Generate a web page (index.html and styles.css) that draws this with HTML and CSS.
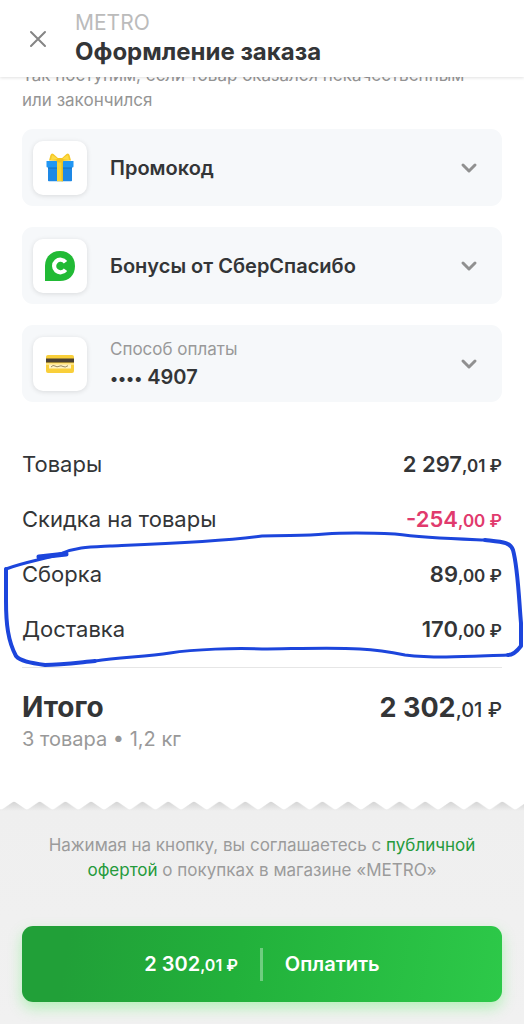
FILE: index.html
```html
<!DOCTYPE html>
<html lang="ru">
<head>
<meta charset="utf-8">
<meta name="viewport" content="width=device-width, initial-scale=1">
<title>Оформление заказа</title>
<link rel="stylesheet" href="styles.css">
</head>
<body>
<header class="header">
  <button class="close" type="button" aria-label="Закрыть">
    <svg width="20" height="20" viewBox="0 0 20 20"><path d="M3 3 17 17M17 3 3 17"/></svg>
  </button>
  <div>
    <p class="store">METRO</p>
    <h1 class="title">Оформление заказа</h1>
  </div>
</header>
<main class="content">
  <p class="note">Так поступим, если товар оказался некачественным или закончился</p>
  <div class="options">
    <button class="option" type="button">
      <span class="tile">
        <svg width="30" height="32" viewBox="0 0 30 32">
          <path fill="#1e88e5" d="M3 14h24v14.5q0 .8-.8.8H3.800q-.8 0-.8-.8z"/>
          <path fill="#2196f3" d="M1.500 9h27v5.500q0 1-1 1h-25q-1 0-1-1z"/>
          <path fill="#1976c8" d="M3 15.500h24v1.200H3z"/>
          <path fill="#fbd535" d="M12 9h6v20.300h-6z"/>
          <path fill="#e8bd24" d="M16.500 9H18v20.300h-1.500z"/>
          <path fill="#f5c827" d="M15 9 4 8.500 5.500 3Q6.500.5 8.500 2L14 7h2l5.500-5q2-1.500 3 1L26 8.500z"/>
          <path fill="#fddb45" d="M7 3.200Q8 3 13 7l-7 1zM23 3.200q-1-.2-6 3.800l7 1z"/>
          <rect fill="#f3c321" x="11.500" y="6" width="7" height="4.500" rx="2"/>
        </svg>
      </span>
      <span class="option-text"><b class="option-title">Промокод</b></span>
      <svg class="chevron" width="18" height="12" viewBox="0 0 18 12"><path d="M3 3l6 6 6-6"/></svg>
    </button>
    <button class="option" type="button">
      <span class="tile">
        <svg width="30" height="32" viewBox="0 0 30 32">
          <path fill="#21ba35" d="M0 31V16C0 7 6 1 15 1s15 6 15 15-6 15-15 15z"/>
          <path fill="none" stroke="#fff" stroke-width="4.200" d="M20.500 12.300A6.300 6.300 0 1 0 20.500 19.700"/>
        </svg>
      </span>
      <span class="option-text"><b class="option-title">Бонусы от СберСпасибо</b></span>
      <svg class="chevron" width="18" height="12" viewBox="0 0 18 12"><path d="M3 3l6 6 6-6"/></svg>
    </button>
    <button class="option" type="button">
      <span class="tile">
        <svg width="30" height="20" viewBox="0 0 30 20">
          <rect fill="#f9cf3a" x="1" y="1" width="28" height="18" rx="2"/>
          <path fill="#ffe27a" d="M1 9h28v2H1z"/>
          <path fill="#4a4033" d="M1 4.500h28v4H1z"/>
          <path fill="#fff3c4" d="M4 10.500h22v4H4z"/>
          <path fill="none" stroke="#8b7d55" stroke-width=".9" d="M6 13q2-2.500 4-1t4 .3 4 .2 5-.8"/>
        </svg>
      </span>
      <span class="option-text"><span class="option-label">Способ оплаты</span><b class="option-title"><span class="dots">••••</span> 4907</b></span>
      <svg class="chevron" width="18" height="12" viewBox="0 0 18 12"><path d="M3 3l6 6 6-6"/></svg>
    </button>
  </div>
  <dl class="costs">
    <div class="row"><dt>Товары</dt><dd class="price">2 297<small>,01 ₽</small></dd></div>
    <div class="row"><dt>Скидка на товары</dt><dd class="price discount">-254<small>,00 ₽</small></dd></div>
  </dl>
  <div class="circled">
    <dl class="costs-fees">
      <div class="row"><dt>Сборка</dt><dd class="price">89<small>,00 ₽</small></dd></div>
      <div class="row"><dt>Доставка</dt><dd class="price">170<small>,00 ₽</small></dd></div>
    </dl>
    <svg class="marker" viewBox="0 525 524 145" preserveAspectRatio="none" aria-hidden="true">
      <path d="M6 568C25 561 45 558 60 553C76 546 90 546 110 545C160 543 220 541 262 535C290 534 306 535 325 533C350 531 375 532 395 533C425 537 460 538 485 539"/>
      <path class="marker-thick" d="M485 539C503 541 510 541 513 549C518 567 519 600 521 622L521 645C518 649 514 654 508 654"/>
      <path d="M508 654C475 655 440 658 405 654C390 651 378 649 360 648C330 646 290 648 262 648C235 647 195 648 170 652C145 656 120 656 95 660"/>
      <path class="marker-thick" d="M95 660C75 662 60 664 45 664C30 662 20 660 16 655C8 640 6 623 6 600L6 568"/>
      <path class="marker-blot" d="M39 556 66 553"/>
    </svg>
  </div>
  <section class="total">
    <div class="total-row"><h2>Итого</h2><strong class="total-price">2 302<small>,01 ₽</small></strong></div>
    <p class="summary">3 товара • 1,2 кг</p>
  </section>
</main>
<footer class="footer">
  <svg class="zigzag" aria-hidden="true">
    <defs>
      <linearGradient id="shade" x1="0" y1="0" x2="0" y2="1"><stop offset="0" stop-color="#d4d4d4"/><stop offset="1" stop-color="#efefef"/></linearGradient>
      <pattern id="teeth" x="1.200" width="25.700" height="10" patternUnits="userSpaceOnUse">
        <path fill="url(#shade)" d="M0 8.500Q1.500 8 3 7L11 1.500Q12.850 0 14.700 1.500L22.700 7Q24.200 8 25.700 8.500V10H0z"/>
      </pattern>
    </defs>
    <rect width="100%" height="10" fill="url(#teeth)"/>
  </svg>
  <div class="footer-body">
    <p class="terms">Нажимая на кнопку, вы соглашаетесь с <a href="#offer">публичной офертой</a> о покупках в магазине «METRO»</p>
    <button class="pay" type="button"><span class="pay-price">2 302<small>,01 ₽</small></span><span class="pay-label">Оплатить</span></button>
  </div>
</footer>
</body>
</html>
```
FILE: styles.css
```css
* { box-sizing: border-box; }
body {
  margin: 0;
  min-height: 100vh;
  display: flex;
  flex-direction: column;
  background: #fff;
  color: #333537;
  font-family: Inter, "Noto Sans", sans-serif;
}
p, h1, h2, dl, dd { margin: 0; }
button { border: 0; padding: 0; font: inherit; color: inherit; cursor: pointer; }
.header {
  position: sticky;
  top: 0;
  z-index: 2;
  display: flex;
  align-items: center;
  gap: 27px;
  padding: 10px 28px 9px;
  background: #fff;
  box-shadow: 0 1px 3px rgba(0, 0, 0, .12);
}
.close { display: flex; background: none; }
.close svg { fill: none; stroke: #858585; stroke-width: 2; stroke-linecap: round; }
.store { color: #bbb; font-size: 21px; line-height: 26px; }
.title { font-size: 24px; line-height: 32px; font-weight: 700; }
.content { padding: 0 22px 47px; }
.note { margin-top: -14px; padding-right: 20px; color: #959595; font-size: 17px; line-height: 25px; }
.options { display: grid; gap: 21px; margin-top: 16px; }
.option {
  display: flex;
  align-items: center;
  width: 100%;
  min-height: 77px;
  padding: 10px 24px 10px 11px;
  border-radius: 11px;
  background: #f6f8fa;
  text-align: left;
}
.tile {
  display: flex;
  align-items: center;
  justify-content: center;
  width: 54px;
  height: 54px;
  border-radius: 10px;
  background: #fff;
  box-shadow: 0 1px 5px rgba(0, 0, 0, .12);
}
.option-text { flex: 1; padding-left: 23px; }
.option-label { display: block; color: #999; font-size: 17px; line-height: 28px; }
.option-title { display: block; font-size: 20px; line-height: 28px; font-weight: 600; }
.dots { font-size: 16px; }
.chevron { fill: none; stroke: #909090; stroke-width: 3; stroke-linecap: round; stroke-linejoin: round; }
.costs { margin-top: 34px; }
.row { display: flex; justify-content: space-between; align-items: center; height: 55px; font-size: 22px; }
.price { font-weight: 600; }
.price small { font-size: 17px; }
.discount { color: #e13a6d; }
.circled { position: relative; }
.marker { position: absolute; top: -20px; left: -22px; width: calc(100% + 44px); height: 145px; fill: none; stroke: #1c45dc; stroke-width: 3; stroke-linejoin: round; stroke-linecap: round; pointer-events: none; }
.marker-thick { stroke-width: 4; }
.marker-blot { stroke-width: 5; }
.total { margin-top: 11px; padding-top: 22px; border-top: 1px solid #e6e6e6; }
.total-row { display: flex; justify-content: space-between; align-items: center; height: 34px; }
.total h2 { font-size: 28px; font-weight: 700; }
.total-price { font-size: 27px; font-weight: 700; }
.total-price small { font-size: 20px; font-weight: 500; }
.summary { color: #999; font-size: 20px; line-height: 30px; }
.footer { flex: 1; display: flex; flex-direction: column; }
.zigzag { display: block; width: 100%; height: 10px; }
.footer-body { flex: 1; padding: 22px 22px; background: linear-gradient(#efefef, #f1f1f1); }
.terms { padding: 0 16px; color: #9b9b9b; font-size: 17px; line-height: 25px; text-align: center; }
.terms a { color: #259a3c; text-decoration: none; }
.pay {
  display: flex;
  align-items: center;
  justify-content: center;
  width: 100%;
  height: 76px;
  margin-top: 43px;
  border-radius: 11px;
  background: linear-gradient(100deg, #21a038 10%, #22b13b 45%, #2dc949);
  box-shadow: 0 6px 14px rgba(70, 240, 80, .35);
  color: #fff;
  font-size: 20px;
  font-weight: 600;
}
.pay small { font-size: 16px; }
.pay-price { padding-right: 22px; line-height: 32px; border-right: 3px solid rgba(255, 255, 255, .35); }
.pay-label { padding-left: 22px; }
```
